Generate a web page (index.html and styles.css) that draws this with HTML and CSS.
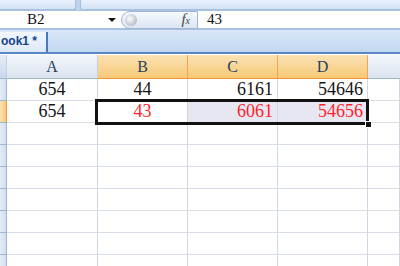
FILE: index.html
```html
<!DOCTYPE html>
<html lang="en">
<head>
    <meta charset="UTF-8">
    <title>Book1</title>
    <link rel="stylesheet" href="styles.css">
</head>
<body>
    <div class="ribbon">
        <div class="rb rb-left"></div>
        <div class="rb rb-right"></div>
    </div>

    <div class="formula">
        <div class="namebox">B2</div>
        <div class="drop"></div>
        <div class="pill">
            <span class="knob"></span>
            <span class="fx">f<sub>x</sub></span>
        </div>
        <div class="input">43</div>
    </div>

    <div class="tabs">
        <div class="tab">ook1 *</div>
    </div>

    <div class="sheet">
        <div class="grid">
            <div class="hd corner"></div>
            <div class="hd">A</div>
            <div class="hd on">B</div>
            <div class="hd on">C</div>
            <div class="hd on">D</div>
            <div class="hd rest"></div>

            <div class="rh"></div>
            <div class="c mid">654</div>
            <div class="c mid">44</div>
            <div class="c">6161</div>
            <div class="c">54646</div>
            <div class="c"></div>

            <div class="rh on"></div>
            <div class="c mid">654</div>
            <div class="c mid red">43</div>
            <div class="c red sel">6061</div>
            <div class="c red sel">54656</div>
            <div class="c"></div>

            <div class="rh"></div><div class="c"></div><div class="c"></div><div class="c"></div><div class="c"></div><div class="c"></div>
            <div class="rh"></div><div class="c"></div><div class="c"></div><div class="c"></div><div class="c"></div><div class="c"></div>
            <div class="rh"></div><div class="c"></div><div class="c"></div><div class="c"></div><div class="c"></div><div class="c"></div>
            <div class="rh"></div><div class="c"></div><div class="c"></div><div class="c"></div><div class="c"></div><div class="c"></div>
            <div class="rh"></div><div class="c"></div><div class="c"></div><div class="c"></div><div class="c"></div><div class="c"></div>
            <div class="rh"></div><div class="c"></div><div class="c"></div><div class="c"></div><div class="c"></div><div class="c"></div>
            <div class="rh"></div><div class="c"></div><div class="c"></div><div class="c"></div><div class="c"></div><div class="c"></div>
        </div>
        <!-- 选区边框 -->
        <div class="selbox"><span class="handle"></span></div>
    </div>
</body>
</html>
```

FILE: styles.css
```css
*{
    margin: 0;
    padding: 0;
    box-sizing: border-box;
}
html,body{
    width: 100%;
    height: 100%;
    overflow: hidden;
    background: #fff;
}
.ribbon{
    height: 11px;
    display: flex;
    gap: 4px;
    background: #bcd1ec;
    border-bottom: 1px solid #a9c2e2;
}
.rb{
    height: 10px;
    background: linear-gradient(#e9f1fb, #d3e2f5);
    border: 1px solid #a8c0df;
    border-top: none;
    border-radius: 0 0 3px 3px;
}
.rb-left{
    width: 79px;
    margin-left: -3px;
}
.rb-right{
    flex: 1;
    margin-right: -3px;
}
.formula{
    height: 19px;
    display: flex;
    align-items: center;
    background: #fff;
    border-bottom: 2px solid #a7c0e2;
    font-family: "Liberation Serif", "DejaVu Serif", serif;
    font-size: 15px;
    color: #111;
}
.namebox{
    width: 107px;
    padding-left: 27px;
    line-height: 17px;
}
.drop{
    width: 0;
    height: 0;
    border-left: 4px solid transparent;
    border-right: 4px solid transparent;
    border-top: 4px solid #111;
    margin: 0 5px 0 1px;
}
.pill{
    width: 77px;
    height: 18px;
    display: flex;
    align-items: center;
    justify-content: space-between;
    padding: 0 7px 0 3px;
    border: 1px solid #9fb6d6;
    border-radius: 9px 0 0 9px;
    background: linear-gradient(#f6f9fd, #dbe6f3);
}
.knob{
    width: 12px;
    height: 12px;
    border-radius: 50%;
    background: radial-gradient(circle at 40% 40%, #fff, #b9bfc8 70%, #9aa3b0);
}
.fx{
    font-style: italic;
    font-size: 15px;
    line-height: 14px;
    color: #444;
}
.fx sub{
    font-size: 10px;
    vertical-align: baseline;
}
.input{
    flex: 1;
    padding-left: 9px;
    line-height: 17px;
}
.tabs{
    height: 24px;
    display: flex;
    align-items: flex-end;
    background: linear-gradient(#d9e6f7, #c2d7f1);
    border-bottom: 2px solid #5a86c5;
}
.tab{
    width: 48px;
    height: 20px;
    line-height: 19px;
    padding-left: 1px;
    background: linear-gradient(#f2f7fd, #dde9f8);
    border-right: 2px solid #4a78bd;
    font-family: "Liberation Sans", Arial, sans-serif;
    font-size: 12px;
    font-weight: bold;
    color: #15428b;
}
.sheet{
    position: relative;
    padding-top: 1px;
}
.grid{
    display: grid;
    grid-template-columns: 7px 91px 90px 90px 90px 1fr;
    grid-auto-rows: 22px;
    grid-template-rows: 24px;
    font-family: "Liberation Serif", "DejaVu Serif", serif;
}
.hd{
    display: flex;
    align-items: center;
    justify-content: center;
    background: linear-gradient(#f3f6fb, #dbe3ee);
    border-right: 1px solid #c5d1e2;
    border-bottom: 1px solid #9eb6ce;
    font-size: 16px;
    color: #27415f;
}
.hd.on{
    background: linear-gradient(#fbe2b4, #f6c976);
    border-right-color: #f2a54c;
    border-bottom-color: #f29536;
}
.hd.corner{
    background: linear-gradient(#e4ecf7, #c9d8ec);
}
.hd.rest{
    border-right: none;
}
.rh{
    background: linear-gradient(90deg, #e4ecf7, #d2def0);
    border-right: 1px solid #9eb6ce;
    border-bottom: 1px solid #9eb6ce;
}
.rh.on{
    background: linear-gradient(90deg, #fbe2b4, #f6c976);
    border-right-color: #f29536;
}
.c{
    display: flex;
    align-items: center;
    justify-content: flex-end;
    padding-right: 4px;
    border-right: 1px solid #d0d7e5;
    border-bottom: 1px solid #dadee8;
    font-size: 18px;
    color: #161616;
}
.c.mid{
    justify-content: center;
    padding-right: 0;
}
.c.red{
    color: #ff1f2f;
}
.c.sel{
    background: #e6e7f1;
}
.selbox{
    position: absolute;
    left: 95px;
    top: 45px;
    width: 274px;
    height: 26px;
    border: 3px solid #111;
}
.handle{
    position: absolute;
    right: -6px;
    bottom: -6px;
    width: 7px;
    height: 7px;
    background: #111;
    border: 1px solid #fff;
}
```
